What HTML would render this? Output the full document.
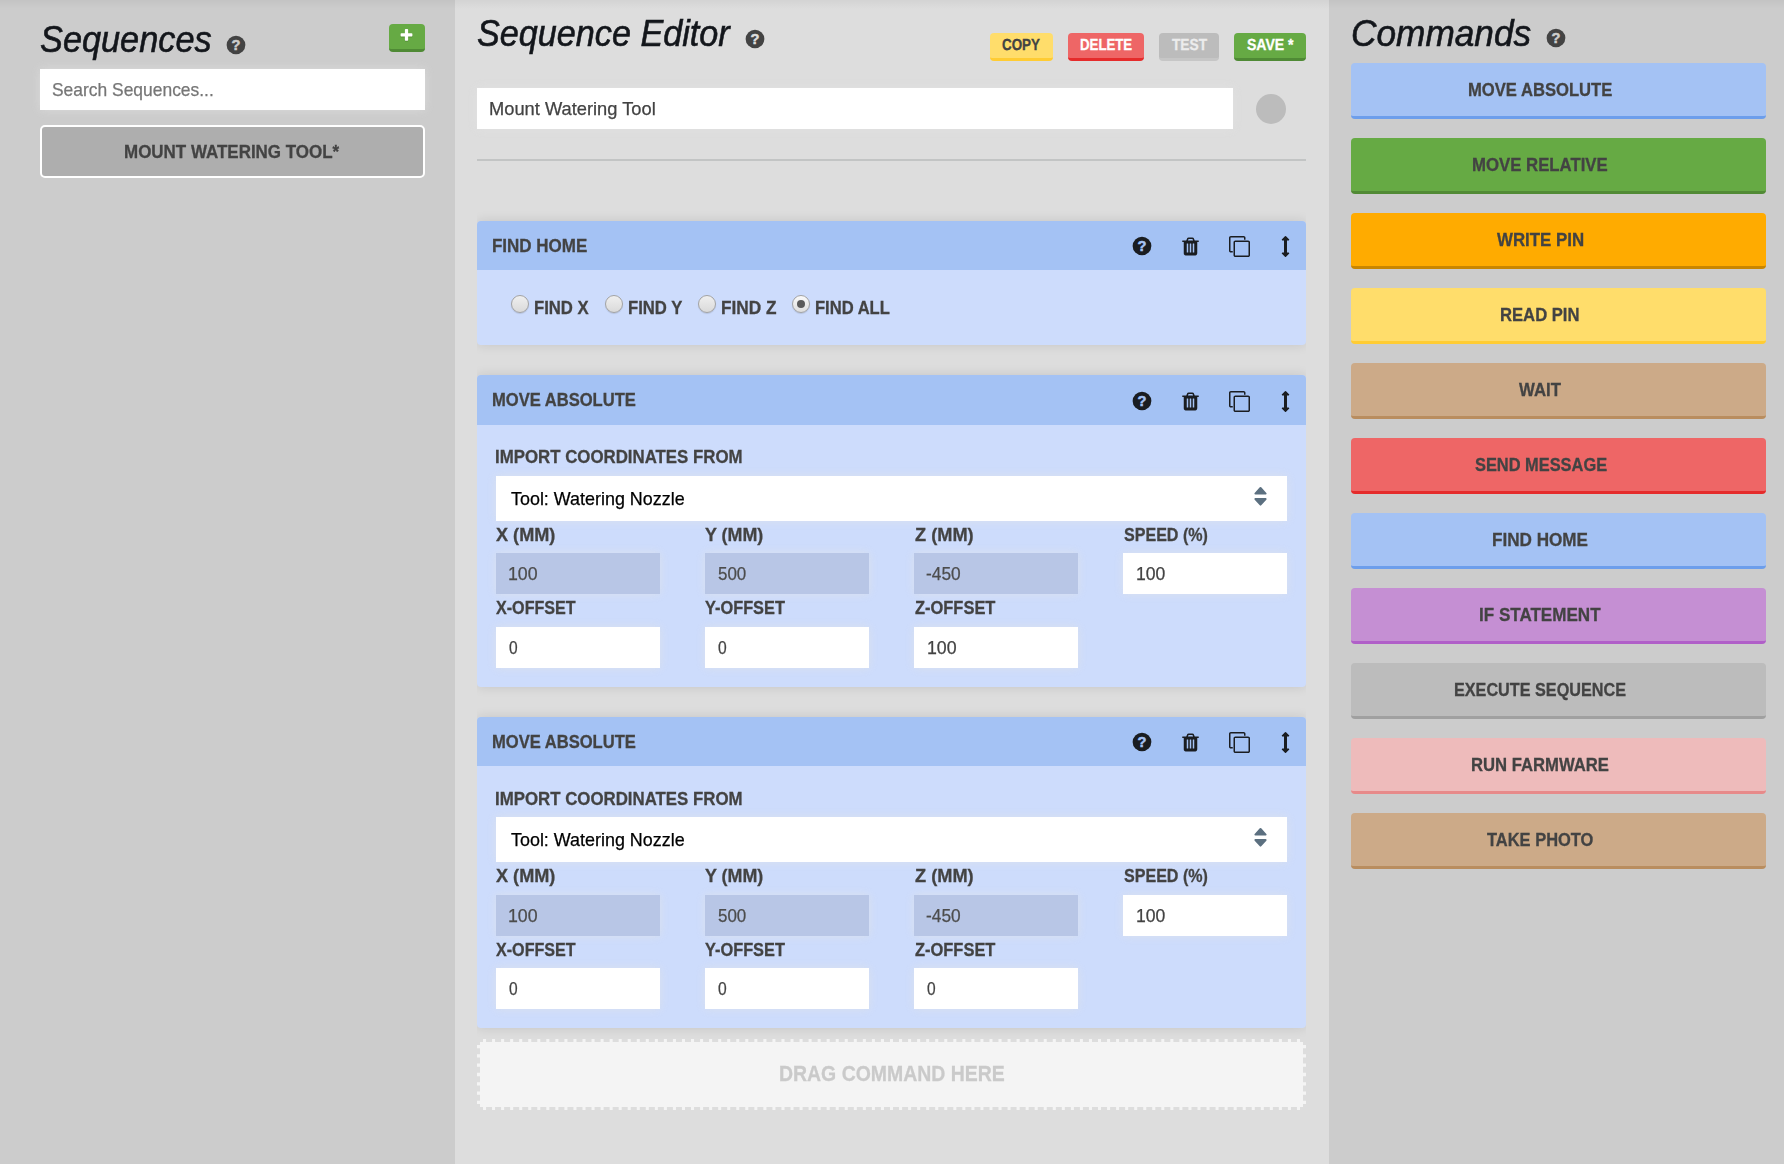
<!DOCTYPE html>
<html lang="en"><head><meta charset="utf-8"><title>Sequence Editor</title>
<style>
html,body{margin:0;padding:0}
body{width:1784px;height:1164px;overflow:hidden;position:relative;background:#cccccc;font-family:"Liberation Sans",sans-serif;}
.app,.col,.abs,.t,.ic,.inp,.btn,.steps,.step,.hd,.radio,.field,.seq-item,.drop,.hr,.dot{position:absolute;box-sizing:border-box;margin:0;padding:0}
.app{left:0;top:0;width:1784px;height:1164px;overflow:hidden}
.t{white-space:nowrap;line-height:1;display:block;transform-origin:0 0;font-weight:normal}
.col{top:0;height:1164px}
.col.seqs,.col.cmds{background:#cccccc}
.col.editor{background:#dddddd}
.topshade{position:absolute;left:0;top:0;width:1784px;height:9px;background:linear-gradient(rgba(0,0,0,.045),rgba(0,0,0,0));pointer-events:none}
.inp{background:#fff;box-shadow:0 0 9px rgba(228,228,228,.6)}
.inp.ro{background:#b8c6e6}
.btn{border-radius:4px;border:0;border-bottom:3px solid}
.steps{overflow:hidden}
.step{border-radius:4px;background:#cddcfc;box-shadow:0 0 12px rgba(0,0,0,.11);overflow:hidden}
.hd{background:#a4c2f4}
.radio{width:18px;height:18px;border-radius:50%;border:1px solid #a3a3a3;background:linear-gradient(#efefef,#dadada);box-shadow:0 1px 1px rgba(0,0,0,.12)}
.radio.on{background:linear-gradient(#fafafa,#dedede)}
.radio.on::after{content:"";position:absolute;left:3.8px;top:3.8px;width:8.4px;height:8.4px;border-radius:50%;background:#5b5b5b}
.seq-item{border:2px solid #fff;border-radius:5px;background:#aeaeae}
.drop{border:3px dashed #dddddd;background:#f4f4f4}
.hr{background:#c2c4c4}
.dot{border-radius:50%;background:#bcbcbc}
</style></head>
<body>
<div class="app" style="left:0px;top:0px;">
 <aside class="col seqs" style="left:0px;top:0px;width:455px;">
  <h3 class="t" style="left:39.84px;top:22px;font-size:36.6px;transform:scaleX(0.9378);color:#13161b;font-style:italic;-webkit-text-stroke:0.6px;">Sequences</h3>
  <svg class="ic help" style="left:225.2px;top:33.5px;width:22px;height:22px;" viewBox="0 0 22 22"><circle cx="11" cy="11" r="9.35" fill="#434343"/><text x="11.05" y="16.1" text-anchor="middle" font-family="Liberation Sans, sans-serif" font-weight="bold" font-size="14.6" fill="#cccccc" stroke="#cccccc" stroke-width="0.5">?</text></svg>
  <div class="btn add" style="left:389px;top:24px;width:36px;height:28px;background:#66aa44;border-color:#4f8a35">
   <svg class="ic" style="left:10.2px;top:3.5px;width:15px;height:15px;filter:drop-shadow(0 1px 0 rgba(0,0,0,.15));" viewBox="0 0 1792 1792" aria-hidden="true"><path fill="#fff" d="M1600 736v192q0 40-28 68t-68 28h-416v416q0 40-28 68t-68 28h-192q-40 0-68-28t-28-68v-416h-416q-40 0-68-28t-28-68v-192q0-40 28-68t68-28h416v-416q0-40 28-68t68-28h192q40 0 68 28t28 68v416h416q40 0 68 28t28 68z"/></svg>
  </div>
  <div class="inp search" style="left:40px;top:69px;width:385px;height:41px;">
   <span class="t" style="left:12.12px;top:12px;font-size:18.2px;transform:scaleX(0.9581);color:#767676;-webkit-text-stroke:0.25px;">Search Sequences...</span>
  </div>
  <div class="seq-item" style="left:40px;top:125px;width:385px;height:53px;">
   <span class="t" style="left:81.97px;top:16px;font-size:18.59px;transform:scaleX(0.9131);color:#434343;font-weight:bold;-webkit-text-stroke:0.3px;">MOUNT WATERING TOOL*</span>
  </div>
 </aside>
 <main class="col editor" style="left:455px;top:0px;width:874px;">
  <h3 class="t" style="left:21.85px;top:16px;font-size:36.6px;transform:scaleX(0.9342);color:#13161b;font-style:italic;-webkit-text-stroke:0.6px;">Sequence Editor</h3>
  <svg class="ic help" style="left:289.2px;top:27.5px;width:22px;height:22px;" viewBox="0 0 22 22"><circle cx="11" cy="11" r="9.35" fill="#434343"/><text x="11.05" y="16.1" text-anchor="middle" font-family="Liberation Sans, sans-serif" font-weight="bold" font-size="14.6" fill="#dddddd" stroke="#dddddd" stroke-width="0.5">?</text></svg>
  <div class="btn" style="left:535px;top:33px;width:63px;height:28px;background:#ffdd6b;border-color:#ffcc33">
   <span class="t" style="left:11.93px;top:4px;font-size:16px;transform:scaleX(0.8375) rotate(0.05deg);color:#434343;font-weight:bold;-webkit-text-stroke:0.3px;">COPY</span>
  </div>
  <div class="btn" style="left:613px;top:33px;width:76px;height:28px;background:#ee6666;border-color:#e52b2b">
   <span class="t" style="left:11.5px;top:4px;font-size:16px;transform:scaleX(0.8272) rotate(0.05deg);color:#fff;font-weight:bold;-webkit-text-stroke:0.3px;">DELETE</span>
  </div>
  <div class="btn" style="left:704px;top:33px;width:60px;height:28px;background:#bcbcbc;border-color:#c6c6c6">
   <span class="t" style="left:12.63px;top:4px;font-size:16px;transform:scaleX(0.8571) rotate(0.05deg);color:#ececec;font-weight:bold;-webkit-text-stroke:0.3px;">TEST</span>
  </div>
  <div class="btn" style="left:779px;top:33px;width:72px;height:28px;background:#66aa44;border-color:#4f8a35">
   <span class="t" style="left:12.63px;top:4px;font-size:16px;transform:scaleX(0.8775) rotate(0.05deg);color:#fff;font-weight:bold;-webkit-text-stroke:0.3px;">SAVE *</span>
  </div>
  <div class="inp name" style="left:22px;top:88px;width:756px;height:41px;">
   <span class="t" style="left:11.62px;top:12px;font-size:18.2px;transform:scaleX(1.0059);color:#434343;-webkit-text-stroke:0.25px;">Mount Watering Tool</span>
  </div>
  <div class="dot" style="left:801px;top:94px;width:30px;height:30px;"></div>
  <div class="hr" style="left:22px;top:159px;width:829px;height:2px;"></div>
  <div class="steps" style="left:22px;top:0px;width:829px;height:1164px;">
   <section class="step" style="left:0px;top:221px;width:829px;height:124px;">
    <div class="hd" style="left:0px;top:0px;width:829px;height:49px;">
     <span class="t" style="left:14.72px;top:16px;font-size:18.59px;transform:scaleX(0.9137);color:#434343;font-weight:bold;-webkit-text-stroke:0.3px;">FIND HOME</span>
     <svg class="ic help" style="left:654.1px;top:13.5px;width:22px;height:22px;" viewBox="0 0 22 22"><circle cx="11" cy="11" r="9.35" fill="#1a1d21"/><text x="11.05" y="16.1" text-anchor="middle" font-family="Liberation Sans, sans-serif" font-weight="bold" font-size="14.6" fill="#a4c2f4" stroke="#a4c2f4" stroke-width="0.5">?</text></svg>
     <svg class="ic" style="left:703px;top:14.7px;width:21px;height:21px;" viewBox="0 0 1792 1792" aria-hidden="true"><path fill="#1a1d21" d="M704 1376v-704q0-14-9-23t-23-9h-64q-14 0-23 9t-9 23v704q0 14 9 23t23 9h64q14 0 23-9t9-23zm256 0v-704q0-14-9-23t-23-9h-64q-14 0-23 9t-9 23v704q0 14 9 23t23 9h64q14 0 23-9t9-23zm256 0v-704q0-14-9-23t-23-9h-64q-14 0-23 9t-9 23v704q0 14 9 23t23 9h64q14 0 23-9t9-23zm-544-992h448l-48-117q-7-9-17-11h-317q-10 2-17 11zm928 32v64q0 14-9 23t-23 9h-96v948q0 83-47 143.500t-113 60.500h-832q-66 0-113-58.500t-47-141.500v-952h-96q-14 0-23-9t-9-23v-64q0-14 9-23t23-9h309l70-167q15-37 54-63t79-26h320q40 0 79 26t54 63l70 167h309q14 0 23 9t9 23z"/></svg>
     <svg class="ic" style="left:751.7px;top:14.9px;width:21px;height:21px;" viewBox="0 0 1792 1792" aria-hidden="true"><path fill="#1a1d21" d="M1664 1632v-1088q0-13-9.500-22.500t-22.500-9.500h-1088q-13 0-22.500 9.500t-9.500 22.500v1088q0 13 9.500 22.500t22.500 9.500h1088q13 0 22.500-9.500t9.500-22.500zm128-1088v1088q0 66-47 113t-113 47h-1088q-66 0-113-47t-47-113v-1088q0-66 47-113t113-47h1088q66 0 113 47t47 113zm-384-384v160h-128v-160q0-13-9.500-22.500t-22.500-9.500h-1088q-13 0-22.500 9.500t-9.500 22.500v1088q0 13 9.500 22.500t22.500 9.500h160v128h-160q-66 0-113-47t-47-113v-1088q0-66 47-113t113-47h1088q66 0 113 47t47 113z"/></svg>
     <svg class="ic" style="left:798.2px;top:15px;width:21px;height:21px;" viewBox="0 0 1792 1792" aria-hidden="true"><path fill="#1a1d21" d="M1216 320q0 26-19 45t-45 19h-128v1024h128q26 0 45 19t19 45-19 45l-256 256q-19 19-45 19t-45-19l-256-256q-19-19-19-45t19-45 45-19h128v-1024h-128q-26 0-45-19t-19-45 19-45l256-256q19-19 45-19t45 19l256 256q19 19 19 45z"/></svg>
    </div>
    <span class="radio" style="left:34px;top:74px;"></span>
    <label class="t" style="left:57.14px;top:78px;font-size:18.59px;transform:scaleX(0.8980);color:#434343;font-weight:bold;-webkit-text-stroke:0.3px;">FIND X</label>
    <span class="radio" style="left:128px;top:74px;"></span>
    <label class="t" style="left:150.74px;top:78px;font-size:18.59px;transform:scaleX(0.8963);color:#434343;font-weight:bold;-webkit-text-stroke:0.3px;">FIND Y</label>
    <span class="radio" style="left:221px;top:74px;"></span>
    <label class="t" style="left:244.21px;top:78px;font-size:18.59px;transform:scaleX(0.9268);color:#434343;font-weight:bold;-webkit-text-stroke:0.3px;">FIND Z</label>
    <span class="radio on" style="left:315px;top:74px;"></span>
    <label class="t" style="left:337.74px;top:78px;font-size:18.59px;transform:scaleX(0.8915);color:#434343;font-weight:bold;-webkit-text-stroke:0.3px;">FIND ALL</label>
   </section>
   <section class="step" style="left:0px;top:375px;width:829px;height:312px;">
    <div class="hd" style="left:0px;top:0px;width:829px;height:50px;">
     <span class="t" style="left:14.74px;top:16px;font-size:18.59px;transform:scaleX(0.8915);color:#434343;font-weight:bold;-webkit-text-stroke:0.3px;">MOVE ABSOLUTE</span>
     <svg class="ic help" style="left:654.1px;top:14.5px;width:22px;height:22px;" viewBox="0 0 22 22"><circle cx="11" cy="11" r="9.35" fill="#1a1d21"/><text x="11.05" y="16.1" text-anchor="middle" font-family="Liberation Sans, sans-serif" font-weight="bold" font-size="14.6" fill="#a4c2f4" stroke="#a4c2f4" stroke-width="0.5">?</text></svg>
     <svg class="ic" style="left:703px;top:15.7px;width:21px;height:21px;" viewBox="0 0 1792 1792" aria-hidden="true"><path fill="#1a1d21" d="M704 1376v-704q0-14-9-23t-23-9h-64q-14 0-23 9t-9 23v704q0 14 9 23t23 9h64q14 0 23-9t9-23zm256 0v-704q0-14-9-23t-23-9h-64q-14 0-23 9t-9 23v704q0 14 9 23t23 9h64q14 0 23-9t9-23zm256 0v-704q0-14-9-23t-23-9h-64q-14 0-23 9t-9 23v704q0 14 9 23t23 9h64q14 0 23-9t9-23zm-544-992h448l-48-117q-7-9-17-11h-317q-10 2-17 11zm928 32v64q0 14-9 23t-23 9h-96v948q0 83-47 143.500t-113 60.500h-832q-66 0-113-58.500t-47-141.500v-952h-96q-14 0-23-9t-9-23v-64q0-14 9-23t23-9h309l70-167q15-37 54-63t79-26h320q40 0 79 26t54 63l70 167h309q14 0 23 9t9 23z"/></svg>
     <svg class="ic" style="left:751.7px;top:15.9px;width:21px;height:21px;" viewBox="0 0 1792 1792" aria-hidden="true"><path fill="#1a1d21" d="M1664 1632v-1088q0-13-9.500-22.500t-22.500-9.500h-1088q-13 0-22.500 9.500t-9.500 22.500v1088q0 13 9.500 22.500t22.500 9.500h1088q13 0 22.500-9.500t9.500-22.500zm128-1088v1088q0 66-47 113t-113 47h-1088q-66 0-113-47t-47-113v-1088q0-66 47-113t113-47h1088q66 0 113 47t47 113zm-384-384v160h-128v-160q0-13-9.500-22.500t-22.500-9.500h-1088q-13 0-22.500 9.500t-9.500 22.500v1088q0 13 9.500 22.500t22.500 9.500h160v128h-160q-66 0-113-47t-47-113v-1088q0-66 47-113t113-47h1088q66 0 113 47t47 113z"/></svg>
     <svg class="ic" style="left:798.2px;top:16px;width:21px;height:21px;" viewBox="0 0 1792 1792" aria-hidden="true"><path fill="#1a1d21" d="M1216 320q0 26-19 45t-45 19h-128v1024h128q26 0 45 19t19 45-19 45l-256 256q-19 19-45 19t-45-19l-256-256q-19-19-19-45t19-45 45-19h128v-1024h-128q-26 0-45-19t-19-45 19-45l256-256q19-19 45-19t45 19l256 256q19 19 19 45z"/></svg>
    </div>
    <label class="t" style="left:18.23px;top:73px;font-size:18.59px;transform:scaleX(0.9063);color:#434343;font-weight:bold;-webkit-text-stroke:0.3px;">IMPORT COORDINATES FROM</label>
    <div class="inp select" style="left:19px;top:101px;width:791px;height:45px;">
     <span class="t" style="left:15.12px;top:14px;font-size:18.2px;transform:scaleX(0.9852);color:#000;-webkit-text-stroke:0.25px;">Tool: Watering Nozzle</span>
     <svg class="ic" style="left:756px;top:9px;width:17px;height:22px;" viewBox="0 0 17 22" aria-hidden="true"><path fill="#5c7080" stroke="#5c7080" stroke-width="2" stroke-linejoin="round" d="M8.5 3 L13.6 8.6 H3.4 Z M8.5 19.6 L13.6 14 H3.4 Z"/></svg>
    </div>
    <label class="t" style="left:19.15px;top:151px;font-size:18.59px;transform:scaleX(0.9756);color:#434343;font-weight:bold;-webkit-text-stroke:0.3px;">X (MM)</label>
    <div class="inp ro" style="left:19px;top:178px;width:164px;height:41px;">
     <span class="t" style="left:11.65px;top:12px;font-size:18.2px;transform:scaleX(0.9752);color:#4c4c4c;-webkit-text-stroke:0.25px;">100</span>
    </div>
    <label class="t" style="left:228.39px;top:151px;font-size:18.59px;transform:scaleX(0.9633);color:#434343;font-weight:bold;-webkit-text-stroke:0.3px;">Y (MM)</label>
    <div class="inp ro" style="left:228px;top:178px;width:164px;height:41px;">
     <span class="t" style="left:13.12px;top:12px;font-size:18.2px;transform:scaleX(0.9318);color:#4c4c4c;-webkit-text-stroke:0.25px;">500</span>
    </div>
    <label class="t" style="left:437.65px;top:151px;font-size:18.59px;transform:scaleX(0.9800);color:#434343;font-weight:bold;-webkit-text-stroke:0.3px;">Z (MM)</label>
    <div class="inp ro" style="left:437px;top:178px;width:164px;height:41px;">
     <span class="t" style="left:12.12px;top:12px;font-size:18.2px;transform:scaleX(0.9511);color:#4c4c4c;-webkit-text-stroke:0.25px;">-450</span>
    </div>
    <label class="t" style="left:646.63px;top:151px;font-size:18.59px;transform:scaleX(0.8646);color:#434343;font-weight:bold;-webkit-text-stroke:0.3px;">SPEED (%)</label>
    <div class="inp" style="left:646px;top:178px;width:164px;height:41px;">
     <span class="t" style="left:12.65px;top:12px;font-size:18.2px;transform:scaleX(0.9668);color:#434343;-webkit-text-stroke:0.25px;">100</span>
    </div>
    <label class="t" style="left:19.13px;top:224px;font-size:18.59px;transform:scaleX(0.8674);color:#434343;font-weight:bold;-webkit-text-stroke:0.3px;">X-OFFSET</label>
    <div class="inp" style="left:19px;top:252px;width:164px;height:41px;">
     <span class="t" style="left:12.61px;top:12px;font-size:18.2px;transform:scaleX(0.8537);color:#434343;-webkit-text-stroke:0.25px;">0</span>
    </div>
    <label class="t" style="left:228.38px;top:224px;font-size:18.59px;transform:scaleX(0.8798);color:#434343;font-weight:bold;-webkit-text-stroke:0.3px;">Y-OFFSET</label>
    <div class="inp" style="left:228px;top:252px;width:164px;height:41px;">
     <span class="t" style="left:12.71px;top:12px;font-size:18.2px;transform:scaleX(0.8585);color:#434343;-webkit-text-stroke:0.25px;">0</span>
    </div>
    <label class="t" style="left:437.63px;top:224px;font-size:18.59px;transform:scaleX(0.8854);color:#434343;font-weight:bold;-webkit-text-stroke:0.3px;">Z-OFFSET</label>
    <div class="inp" style="left:437px;top:252px;width:164px;height:41px;">
     <span class="t" style="left:12.65px;top:12px;font-size:18.2px;transform:scaleX(0.9752);color:#434343;-webkit-text-stroke:0.25px;">100</span>
    </div>
   </section>
   <section class="step" style="left:0px;top:717px;width:829px;height:311px;">
    <div class="hd" style="left:0px;top:0px;width:829px;height:49px;">
     <span class="t" style="left:14.74px;top:16px;font-size:18.59px;transform:scaleX(0.8915);color:#434343;font-weight:bold;-webkit-text-stroke:0.3px;">MOVE ABSOLUTE</span>
     <svg class="ic help" style="left:654.1px;top:13.7px;width:22px;height:22px;" viewBox="0 0 22 22"><circle cx="11" cy="11" r="9.35" fill="#1a1d21"/><text x="11.05" y="16.1" text-anchor="middle" font-family="Liberation Sans, sans-serif" font-weight="bold" font-size="14.6" fill="#a4c2f4" stroke="#a4c2f4" stroke-width="0.5">?</text></svg>
     <svg class="ic" style="left:703px;top:14.9px;width:21px;height:21px;" viewBox="0 0 1792 1792" aria-hidden="true"><path fill="#1a1d21" d="M704 1376v-704q0-14-9-23t-23-9h-64q-14 0-23 9t-9 23v704q0 14 9 23t23 9h64q14 0 23-9t9-23zm256 0v-704q0-14-9-23t-23-9h-64q-14 0-23 9t-9 23v704q0 14 9 23t23 9h64q14 0 23-9t9-23zm256 0v-704q0-14-9-23t-23-9h-64q-14 0-23 9t-9 23v704q0 14 9 23t23 9h64q14 0 23-9t9-23zm-544-992h448l-48-117q-7-9-17-11h-317q-10 2-17 11zm928 32v64q0 14-9 23t-23 9h-96v948q0 83-47 143.500t-113 60.500h-832q-66 0-113-58.500t-47-141.500v-952h-96q-14 0-23-9t-9-23v-64q0-14 9-23t23-9h309l70-167q15-37 54-63t79-26h320q40 0 79 26t54 63l70 167h309q14 0 23 9t9 23z"/></svg>
     <svg class="ic" style="left:751.7px;top:15.1px;width:21px;height:21px;" viewBox="0 0 1792 1792" aria-hidden="true"><path fill="#1a1d21" d="M1664 1632v-1088q0-13-9.500-22.500t-22.500-9.500h-1088q-13 0-22.500 9.500t-9.500 22.500v1088q0 13 9.500 22.500t22.500 9.500h1088q13 0 22.500-9.500t9.500-22.500zm128-1088v1088q0 66-47 113t-113 47h-1088q-66 0-113-47t-47-113v-1088q0-66 47-113t113-47h1088q66 0 113 47t47 113zm-384-384v160h-128v-160q0-13-9.500-22.500t-22.500-9.500h-1088q-13 0-22.500 9.500t-9.500 22.500v1088q0 13 9.500 22.500t22.500 9.500h160v128h-160q-66 0-113-47t-47-113v-1088q0-66 47-113t113-47h1088q66 0 113 47t47 113z"/></svg>
     <svg class="ic" style="left:798.2px;top:15.2px;width:21px;height:21px;" viewBox="0 0 1792 1792" aria-hidden="true"><path fill="#1a1d21" d="M1216 320q0 26-19 45t-45 19h-128v1024h128q26 0 45 19t19 45-19 45l-256 256q-19 19-45 19t-45-19l-256-256q-19-19-19-45t19-45 45-19h128v-1024h-128q-26 0-45-19t-19-45 19-45l256-256q19-19 45-19t45 19l256 256q19 19 19 45z"/></svg>
    </div>
    <label class="t" style="left:18.23px;top:73px;font-size:18.59px;transform:scaleX(0.9063);color:#434343;font-weight:bold;-webkit-text-stroke:0.3px;">IMPORT COORDINATES FROM</label>
    <div class="inp select" style="left:19px;top:100px;width:791px;height:44.5px;">
     <span class="t" style="left:15.12px;top:14px;font-size:18.2px;transform:scaleX(0.9852);color:#000;-webkit-text-stroke:0.25px;">Tool: Watering Nozzle</span>
     <svg class="ic" style="left:756px;top:9px;width:17px;height:22px;" viewBox="0 0 17 22" aria-hidden="true"><path fill="#5c7080" stroke="#5c7080" stroke-width="2" stroke-linejoin="round" d="M8.5 3 L13.6 8.6 H3.4 Z M8.5 19.6 L13.6 14 H3.4 Z"/></svg>
    </div>
    <label class="t" style="left:19.15px;top:150px;font-size:18.59px;transform:scaleX(0.9756);color:#434343;font-weight:bold;-webkit-text-stroke:0.3px;">X (MM)</label>
    <div class="inp ro" style="left:19px;top:178px;width:164px;height:41px;">
     <span class="t" style="left:11.65px;top:12px;font-size:18.2px;transform:scaleX(0.9752);color:#4c4c4c;-webkit-text-stroke:0.25px;">100</span>
    </div>
    <label class="t" style="left:228.39px;top:150px;font-size:18.59px;transform:scaleX(0.9633);color:#434343;font-weight:bold;-webkit-text-stroke:0.3px;">Y (MM)</label>
    <div class="inp ro" style="left:228px;top:178px;width:164px;height:41px;">
     <span class="t" style="left:13.12px;top:12px;font-size:18.2px;transform:scaleX(0.9318);color:#4c4c4c;-webkit-text-stroke:0.25px;">500</span>
    </div>
    <label class="t" style="left:437.65px;top:150px;font-size:18.59px;transform:scaleX(0.9800);color:#434343;font-weight:bold;-webkit-text-stroke:0.3px;">Z (MM)</label>
    <div class="inp ro" style="left:437px;top:178px;width:164px;height:41px;">
     <span class="t" style="left:12.12px;top:12px;font-size:18.2px;transform:scaleX(0.9511);color:#4c4c4c;-webkit-text-stroke:0.25px;">-450</span>
    </div>
    <label class="t" style="left:646.63px;top:150px;font-size:18.59px;transform:scaleX(0.8646);color:#434343;font-weight:bold;-webkit-text-stroke:0.3px;">SPEED (%)</label>
    <div class="inp" style="left:646px;top:178px;width:164px;height:41px;">
     <span class="t" style="left:12.65px;top:12px;font-size:18.2px;transform:scaleX(0.9668);color:#434343;-webkit-text-stroke:0.25px;">100</span>
    </div>
    <label class="t" style="left:19.13px;top:224px;font-size:18.59px;transform:scaleX(0.8674);color:#434343;font-weight:bold;-webkit-text-stroke:0.3px;">X-OFFSET</label>
    <div class="inp" style="left:19px;top:251px;width:164px;height:41px;">
     <span class="t" style="left:12.61px;top:12px;font-size:18.2px;transform:scaleX(0.8537);color:#434343;-webkit-text-stroke:0.25px;">0</span>
    </div>
    <label class="t" style="left:228.38px;top:224px;font-size:18.59px;transform:scaleX(0.8798);color:#434343;font-weight:bold;-webkit-text-stroke:0.3px;">Y-OFFSET</label>
    <div class="inp" style="left:228px;top:251px;width:164px;height:41px;">
     <span class="t" style="left:12.71px;top:12px;font-size:18.2px;transform:scaleX(0.8585);color:#434343;-webkit-text-stroke:0.25px;">0</span>
    </div>
    <label class="t" style="left:437.63px;top:224px;font-size:18.59px;transform:scaleX(0.8854);color:#434343;font-weight:bold;-webkit-text-stroke:0.3px;">Z-OFFSET</label>
    <div class="inp" style="left:437px;top:251px;width:164px;height:41px;">
     <span class="t" style="left:12.61px;top:12px;font-size:18.2px;transform:scaleX(0.8537);color:#434343;-webkit-text-stroke:0.25px;">0</span>
    </div>
   </section>
  </div>
  <div class="drop" style="left:22px;top:1039px;width:829px;height:71px;">
   <span class="t" style="left:298.85px;top:21px;font-size:21.9px;transform:scaleX(0.8882);color:#cacaca;font-weight:bold;-webkit-text-stroke:0.3px;">DRAG COMMAND HERE</span>
  </div>
 </main>
 <aside class="col cmds" style="left:1329px;top:0px;width:455px;">
  <h3 class="t" style="left:21.86px;top:16px;font-size:36.6px;transform:scaleX(0.9632);color:#13161b;font-style:italic;-webkit-text-stroke:0.6px;">Commands</h3>
  <svg class="ic help" style="left:215.6px;top:27.3px;width:22px;height:22px;" viewBox="0 0 22 22"><circle cx="11" cy="11" r="9.35" fill="#434343"/><text x="11.05" y="16.1" text-anchor="middle" font-family="Liberation Sans, sans-serif" font-weight="bold" font-size="14.6" fill="#cccccc" stroke="#cccccc" stroke-width="0.5">?</text></svg>
  <div class="btn cmd" style="left:22px;top:63px;width:415px;height:56px;background:#a4c2f4;border-color:#6d9eeb">
   <span class="t" style="left:116.74px;top:18px;font-size:18.59px;transform:scaleX(0.8946);color:#434343;font-weight:bold;-webkit-text-stroke:0.3px;">MOVE ABSOLUTE</span>
  </div>
  <div class="btn cmd" style="left:22px;top:138px;width:415px;height:56px;background:#66aa44;border-color:#518a35">
   <span class="t" style="left:121.48px;top:18px;font-size:18.59px;transform:scaleX(0.9028);color:#434343;font-weight:bold;-webkit-text-stroke:0.3px;">MOVE RELATIVE</span>
  </div>
  <div class="btn cmd" style="left:22px;top:213px;width:415px;height:56px;background:#ffab00;border-color:#c98600">
   <span class="t" style="left:146.14px;top:18px;font-size:18.59px;transform:scaleX(0.9075);color:#434343;font-weight:bold;-webkit-text-stroke:0.3px;">WRITE PIN</span>
  </div>
  <div class="btn cmd" style="left:22px;top:288px;width:415px;height:56px;background:#ffdd6b;border-color:#ffcc33">
   <span class="t" style="left:149.24px;top:18px;font-size:18.59px;transform:scaleX(0.8955);color:#434343;font-weight:bold;-webkit-text-stroke:0.3px;">READ PIN</span>
  </div>
  <div class="btn cmd" style="left:22px;top:363px;width:415px;height:56px;background:#ccaa88;border-color:#b98d5f">
   <span class="t" style="left:168.14px;top:18px;font-size:18.59px;transform:scaleX(0.9021);color:#434343;font-weight:bold;-webkit-text-stroke:0.3px;">WAIT</span>
  </div>
  <div class="btn cmd" style="left:22px;top:438px;width:415px;height:56px;background:#ee6666;border-color:#e52b2b">
   <span class="t" style="left:123.88px;top:18px;font-size:18.59px;transform:scaleX(0.8824);color:#434343;font-weight:bold;-webkit-text-stroke:0.3px;">SEND MESSAGE</span>
  </div>
  <div class="btn cmd" style="left:22px;top:513px;width:415px;height:56px;background:#a4c2f4;border-color:#6d9eeb">
   <span class="t" style="left:141.22px;top:18px;font-size:18.59px;transform:scaleX(0.9210);color:#434343;font-weight:bold;-webkit-text-stroke:0.3px;">FIND HOME</span>
  </div>
  <div class="btn cmd" style="left:22px;top:588px;width:415px;height:56px;background:#c58fd3;border-color:#b05fc8">
   <span class="t" style="left:127.72px;top:18px;font-size:18.59px;transform:scaleX(0.9177);color:#434343;font-weight:bold;-webkit-text-stroke:0.3px;">IF STATEMENT</span>
  </div>
  <div class="btn cmd" style="left:22px;top:663px;width:415px;height:56px;background:#bcbcbc;border-color:#a0a0a0">
   <span class="t" style="left:103.26px;top:18px;font-size:18.59px;transform:scaleX(0.8721);color:#434343;font-weight:bold;-webkit-text-stroke:0.3px;">EXECUTE SEQUENCE</span>
  </div>
  <div class="btn cmd" style="left:22px;top:738px;width:415px;height:56px;background:#eebbbb;border-color:#e78a8a">
   <span class="t" style="left:120.49px;top:18px;font-size:18.59px;transform:scaleX(0.8973);color:#434343;font-weight:bold;-webkit-text-stroke:0.3px;">RUN FARMWARE</span>
  </div>
  <div class="btn cmd" style="left:22px;top:813px;width:415px;height:56px;background:#ccaa88;border-color:#b98d5f">
   <span class="t" style="left:136.38px;top:18px;font-size:18.59px;transform:scaleX(0.8860);color:#434343;font-weight:bold;-webkit-text-stroke:0.3px;">TAKE PHOTO</span>
  </div>
 </aside>
</div>
<div class="topshade"></div>
</body></html>
